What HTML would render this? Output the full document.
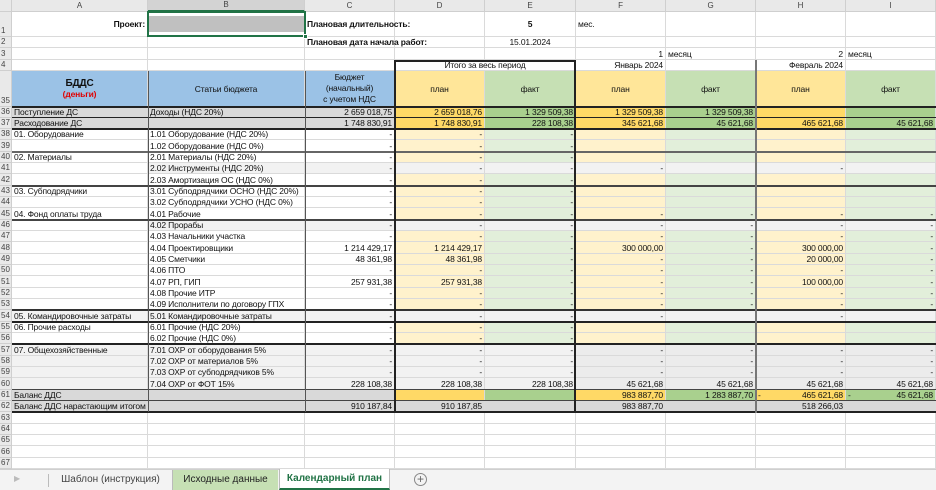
<!DOCTYPE html>
<html><head><meta charset="utf-8">
<style>
*{box-sizing:border-box;margin:0;padding:0}
body{width:936px;height:490px;overflow:hidden;background:#fff;font-family:"Liberation Sans",Arial,sans-serif;font-size:8.5px;letter-spacing:-0.15px;color:#111;position:relative}
table{border-collapse:separate;border-spacing:0;table-layout:fixed;position:absolute;left:0;top:0;width:936px}
td{border-right:1px solid #dadada;border-bottom:1px solid #dadada;padding:0 2px;white-space:nowrap;overflow:hidden;line-height:10px;vertical-align:middle}
td.rh{background:#e9e9e9;color:#444;text-align:left;padding-left:1px;border-color:#cfcfcf;font-size:8px;vertical-align:bottom;letter-spacing:0}
tr.ch td{background:#e9e9e9;color:#444;text-align:center;border-color:#cfcfcf;vertical-align:middle;font-size:8px}
.r{text-align:right}.c{text-align:center}
.y{background:#fff2cc}.g{background:#e2efda}.Y{background:#ffd966}.G{background:#a9d08e}
.s{background:#f2f2f2}.s2{background:#ececec}.S{background:#d9d9d9}
.b{font-weight:bold}
.bl{background:#9bc2e6}
.hy{background:#ffe699}.hg{background:#c6e0b4}
.ov{overflow:visible}
.ln{position:absolute;background:#222}
</style></head><body>
<table>
<colgroup><col style="width:12px"><col style="width:136px"><col style="width:157px"><col style="width:90px"><col style="width:90px"><col style="width:91px"><col style="width:90px"><col style="width:90px"><col style="width:90px"><col style="width:90px"></colgroup>
<tr class="ch" style="height:12px"><td></td><td>A</td><td style="background:#d3d3d3;border-bottom:2px solid #217346">B</td><td>C</td><td>D</td><td>E</td><td>F</td><td>G</td><td>H</td><td>I</td></tr>
<tr style="height:25px"><td class="rh">1</td><td class="r b">Проект:</td><td style="padding:2px 0 2px 1px"><div style="background:#c0c0c0;height:16px"></div></td><td class="b ov">Плановая длительность:</td><td></td><td class="c b">5</td><td>мес.</td><td></td><td></td><td></td></tr>
<tr style="height:11px"><td class="rh">2</td><td></td><td></td><td class="b ov">Плановая дата начала работ:</td><td></td><td class="c">15.01.2024</td><td></td><td></td><td></td><td></td></tr>
<tr style="height:12px"><td class="rh">3</td><td></td><td></td><td></td><td></td><td></td><td class="r">1</td><td>месяц</td><td class="r">2</td><td>месяц</td></tr>
<tr style="height:11px"><td class="rh">4</td><td></td><td></td><td></td><td colspan="2" class="c">Итого за весь период</td><td class="r">Январь 2024</td><td></td><td class="r">Февраль 2024</td><td></td></tr>
<tr style="height:36px"><td class="rh">35</td><td class="bl c" style="line-height:11px"><span class="b" style="font-size:10px">БДДС</span><br><span class="b" style="color:#e00000">(деньги)</span></td><td class="bl c">Статьи бюджета</td><td class="bl c" style="line-height:11px">Бюджет<br>(начальный)<br>с учетом НДС</td><td class="hy c">план</td><td class="hg c">факт</td><td class="hy c">план</td><td class="hg c">факт</td><td class="hy c">план</td><td class="hg c">факт</td></tr>
<tr style="height:11px"><td class="rh">36</td><td class="S">Поступление ДС</td><td class="S">Доходы (НДС 20%)</td><td class="S r">2 659 018,75</td><td class="Y r">2 659 018,76</td><td class="G r">1 329 509,38</td><td class="Y r">1 329 509,38</td><td class="G r">1 329 509,38</td><td class="Y"></td><td class="G"></td></tr>
<tr style="height:11px"><td class="rh">37</td><td class="S">Расходование ДС</td><td class="S"></td><td class="S r">1 748 830,91</td><td class="Y r">1 748 830,91</td><td class="G r">228 108,38</td><td class="Y r">345 621,68</td><td class="G r">45 621,68</td><td class="Y r">465 621,68</td><td class="G r">45 621,68</td></tr>
<tr style="height:11px"><td class="rh">38</td><td>01. Оборудование</td><td>1.01 Оборудование (НДС 20%)</td><td class="r">-</td><td class="y r">-</td><td class="g r">-</td><td class="y"></td><td class="g"></td><td class="y"></td><td class="g"></td></tr>
<tr style="height:12px"><td class="rh">39</td><td></td><td>1.02 Оборудование (НДС 0%)</td><td class="r">-</td><td class="y r">-</td><td class="g r">-</td><td class="y"></td><td class="g"></td><td class="y"></td><td class="g"></td></tr>
<tr style="height:11px"><td class="rh">40</td><td>02. Материалы</td><td>2.01 Материалы (НДС 20%)</td><td class="r">-</td><td class="y r">-</td><td class="g r">-</td><td class="y"></td><td class="g"></td><td class="y"></td><td class="g"></td></tr>
<tr style="height:11px"><td class="rh">41</td><td></td><td class="s">2.02 Инструменты (НДС 20%)</td><td class="s r">-</td><td class="s r">-</td><td class="s r">-</td><td class="s r">-</td><td class="s"></td><td class="s r">-</td><td class="s"></td></tr>
<tr style="height:12px"><td class="rh">42</td><td></td><td>2.03 Амортизация ОС (НДС 0%)</td><td class="r">-</td><td class="y r">-</td><td class="g r">-</td><td class="y"></td><td class="g"></td><td class="y"></td><td class="g"></td></tr>
<tr style="height:11px"><td class="rh">43</td><td>03. Субподрядчики</td><td>3.01 Субподрядчики ОСНО (НДС 20%)</td><td class="r">-</td><td class="y r">-</td><td class="g r">-</td><td class="y"></td><td class="g"></td><td class="y"></td><td class="g"></td></tr>
<tr style="height:11px"><td class="rh">44</td><td></td><td>3.02 Субподрядчики УСНО (НДС 0%)</td><td class="r">-</td><td class="y r">-</td><td class="g r">-</td><td class="y"></td><td class="g"></td><td class="y"></td><td class="g"></td></tr>
<tr style="height:12px"><td class="rh">45</td><td>04. Фонд оплаты труда</td><td>4.01 Рабочие</td><td class="r">-</td><td class="y r">-</td><td class="g r">-</td><td class="y r">-</td><td class="g r">-</td><td class="y r">-</td><td class="g r">-</td></tr>
<tr style="height:11px"><td class="rh">46</td><td></td><td class="s">4.02 Прорабы</td><td class="s r">-</td><td class="s r">-</td><td class="s r">-</td><td class="s r">-</td><td class="s r">-</td><td class="s r">-</td><td class="s r">-</td></tr>
<tr style="height:11px"><td class="rh">47</td><td></td><td>4.03 Начальники участка</td><td class="r">-</td><td class="y r">-</td><td class="g r">-</td><td class="y r">-</td><td class="g r">-</td><td class="y r">-</td><td class="g r">-</td></tr>
<tr style="height:12px"><td class="rh">48</td><td></td><td>4.04 Проектировщики</td><td class="r">1 214 429,17</td><td class="y r">1 214 429,17</td><td class="g r">-</td><td class="y r">300 000,00</td><td class="g r">-</td><td class="y r">300 000,00</td><td class="g r">-</td></tr>
<tr style="height:11px"><td class="rh">49</td><td></td><td>4.05 Сметчики</td><td class="r">48 361,98</td><td class="y r">48 361,98</td><td class="g r">-</td><td class="y r">-</td><td class="g r">-</td><td class="y r">20 000,00</td><td class="g r">-</td></tr>
<tr style="height:11px"><td class="rh">50</td><td></td><td>4.06 ПТО</td><td class="r">-</td><td class="y r">-</td><td class="g r">-</td><td class="y r">-</td><td class="g r">-</td><td class="y r">-</td><td class="g r">-</td></tr>
<tr style="height:12px"><td class="rh">51</td><td></td><td>4.07 РП, ГИП</td><td class="r">257 931,38</td><td class="y r">257 931,38</td><td class="g r">-</td><td class="y r">-</td><td class="g r">-</td><td class="y r">100 000,00</td><td class="g r">-</td></tr>
<tr style="height:11px"><td class="rh">52</td><td></td><td>4.08 Прочие ИТР</td><td class="r">-</td><td class="y r">-</td><td class="g r">-</td><td class="y r">-</td><td class="g r">-</td><td class="y r">-</td><td class="g r">-</td></tr>
<tr style="height:11px"><td class="rh">53</td><td></td><td>4.09 Исполнители по договору ГПХ</td><td class="r">-</td><td class="y r">-</td><td class="g r">-</td><td class="y r">-</td><td class="g r">-</td><td class="y r">-</td><td class="g r">-</td></tr>
<tr style="height:12px"><td class="rh">54</td><td class="s">05. Командировочные затраты</td><td class="s">5.01 Командировочные затраты</td><td class="s r">-</td><td class="s r">-</td><td class="s r">-</td><td class="s r">-</td><td class="s"></td><td class="s r">-</td><td class="s"></td></tr>
<tr style="height:11px"><td class="rh">55</td><td>06. Прочие расходы</td><td>6.01 Прочие (НДС 20%)</td><td class="r">-</td><td class="y r">-</td><td class="g r">-</td><td class="y"></td><td class="g"></td><td class="y"></td><td class="g"></td></tr>
<tr style="height:11px"><td class="rh">56</td><td></td><td>6.02 Прочие (НДС 0%)</td><td class="r">-</td><td class="y r">-</td><td class="g r">-</td><td class="y"></td><td class="g"></td><td class="y"></td><td class="g"></td></tr>
<tr style="height:12px"><td class="rh">57</td><td class="s">07. Общехозяйственные</td><td class="s">7.01 ОХР от оборудования 5%</td><td class="s r">-</td><td class="s r">-</td><td class="s r">-</td><td class="s2 r">-</td><td class="s2 r">-</td><td class="s2 r">-</td><td class="s2 r">-</td></tr>
<tr style="height:11px"><td class="rh">58</td><td class="s"></td><td class="s">7.02 ОХР от материалов 5%</td><td class="s r">-</td><td class="s r">-</td><td class="s r">-</td><td class="s2 r">-</td><td class="s2 r">-</td><td class="s2 r">-</td><td class="s2 r">-</td></tr>
<tr style="height:11px"><td class="rh">59</td><td class="s"></td><td class="s">7.03 ОХР от субподрядчиков 5%</td><td class="s r">-</td><td class="s r">-</td><td class="s r">-</td><td class="s2 r">-</td><td class="s2 r">-</td><td class="s2 r">-</td><td class="s2 r">-</td></tr>
<tr style="height:12px"><td class="rh">60</td><td class="s"></td><td class="s">7.04 ОХР от ФОТ 15%</td><td class="s r">228 108,38</td><td class="s r">228 108,38</td><td class="s r">228 108,38</td><td class="s2 r">45 621,68</td><td class="s2 r">45 621,68</td><td class="s2 r">45 621,68</td><td class="s2 r">45 621,68</td></tr>
<tr style="height:11px"><td class="rh">61</td><td class="S">Баланс ДДС</td><td class="S"></td><td class="S"></td><td class="Y"></td><td class="G"></td><td class="Y r">983 887,70</td><td class="G r">1 283 887,70</td><td class="Y r"><span style="float:left">-</span>465 621,68</td><td class="G r"><span style="float:left">-</span>45 621,68</td></tr>
<tr style="height:11px"><td class="rh">62</td><td class="S ov">Баланс ДДС нарастающим итогом</td><td class="S"></td><td class="S r">910 187,84</td><td class="S r">910 187,85</td><td class="S"></td><td class="S r">983 887,70</td><td class="S"></td><td class="S r">518 266,03</td><td class="S"></td></tr>
<tr style="height:12px"><td class="rh">63</td><td></td><td></td><td></td><td></td><td></td><td></td><td></td><td></td><td></td></tr>
<tr style="height:11px"><td class="rh">64</td><td></td><td></td><td></td><td></td><td></td><td></td><td></td><td></td><td></td></tr>
<tr style="height:11px"><td class="rh">65</td><td></td><td></td><td></td><td></td><td></td><td></td><td></td><td></td><td></td></tr>
<tr style="height:12px"><td class="rh">66</td><td></td><td></td><td></td><td></td><td></td><td></td><td></td><td></td><td></td></tr>
<tr style="height:11px"><td class="rh">67</td><td></td><td></td><td></td><td></td><td></td><td></td><td></td><td></td><td></td></tr>
</table>
<div style="position:absolute;left:147px;top:11px;width:159px;height:26px;border:2px solid #217346"></div>
<div style="position:absolute;left:303px;top:34px;width:5px;height:5px;background:#217346;border:1px solid #fff"></div>
<div class="ln" style="left:12px;top:106px;width:924px;height:2px"></div>
<div class="ln" style="left:12px;top:117px;width:924px;height:1px"></div>
<div class="ln" style="left:12px;top:128px;width:924px;height:2px"></div>
<div class="ln" style="left:12px;top:151px;width:924px;height:2px;background:#666"></div>
<div class="ln" style="left:12px;top:185px;width:924px;height:2px;background:#444"></div>
<div class="ln" style="left:12px;top:219px;width:924px;height:2px;background:#444"></div>
<div class="ln" style="left:12px;top:309px;width:924px;height:2px;background:#333"></div>
<div class="ln" style="left:12px;top:321px;width:924px;height:2px"></div>
<div class="ln" style="left:12px;top:343px;width:924px;height:2px"></div>
<div class="ln" style="left:12px;top:389px;width:924px;height:1px;background:#444"></div>
<div class="ln" style="left:12px;top:400px;width:924px;height:1px;background:#444"></div>
<div class="ln" style="left:12px;top:411px;width:924px;height:2px"></div>
<div class="ln" style="left:148px;top:71px;width:1px;height:341px;background:#555"></div>
<div class="ln" style="left:305px;top:71px;width:1px;height:341px;background:#555"></div>
<div class="ln" style="left:394px;top:60px;width:2px;height:353px"></div>
<div class="ln" style="left:574px;top:60px;width:2px;height:353px"></div>
<div class="ln" style="left:394px;top:60px;width:182px;height:2px"></div>
<div class="ln" style="left:755px;top:60px;width:2px;height:353px;background:#777"></div>
<div style="position:absolute;left:0;top:469px;width:936px;height:21px;background:#f3f3f3;border-top:1px solid #cfcfcf"></div>
<div style="position:absolute;left:14px;top:474px;color:#bbb;font-size:8px">&#9654;</div>
<div style="position:absolute;left:48px;top:474px;width:1px;height:13px;background:#bbb"></div>
<div style="position:absolute;left:49px;top:470px;width:123px;height:20px;font-size:10px;color:#444;text-align:center;line-height:19px;letter-spacing:0">Шаблон (инструкция)</div>
<div style="position:absolute;left:172px;top:470px;width:1px;height:20px;background:#bbb"></div>
<div style="position:absolute;left:173px;top:470px;width:105px;height:20px;background:#c6e0b4;font-size:10px;color:#222;text-align:center;line-height:19px;letter-spacing:0">Исходные данные</div>
<div style="position:absolute;left:279px;top:469px;width:111px;height:21px;background:#fff;border-left:1px solid #bbb;border-right:1px solid #bbb;border-bottom:2px solid #217346;font-size:10px;font-weight:bold;color:#217346;text-align:center;line-height:19px;letter-spacing:0">Календарный план</div>
<div style="position:absolute;left:414px;top:473px;width:13px;height:13px;border:1px solid #888;border-radius:50%;color:#666;font-size:12px;line-height:11px;text-align:center;letter-spacing:0">+</div>
</body></html>
